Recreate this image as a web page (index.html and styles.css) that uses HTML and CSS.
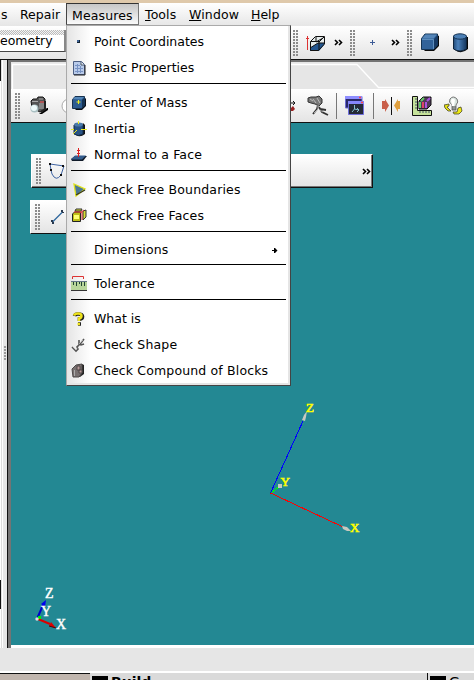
FILE: index.html
```html
<!DOCTYPE html>
<html lang="en">
<head>
<meta charset="utf-8">
<title>Geometry</title>
<link rel="stylesheet" href="styles.css">
</head>
<body>
<div class="screen">
  <div class="desk-strip"></div>
  <nav class="menubar">
    <span class="mb cut">s</span>
    <span class="mb repair">Repair</span>
    <span class="mb active">Measures</span>
    <span class="mb tools"><u>T</u>ools</span>
    <span class="mb window"><u>W</u>indow</span>
    <span class="mb help"><u>H</u>elp</span>
  </nav>

  <div class="toolbar main-bar">
    <div class="combo">eometry</div>
    <div class="bar-right">
      <i class="grip"></i>
      <svg class="ic i-wire" width="20" height="20" viewBox="0 0 20 20"><path d="M4 9L9 3H18.500V11L13 18H4Z" fill="#e6ecec"/><path d="M4 15L12 10H18V12L13 18H4Z" fill="#23568f"/><path d="M4.500 17.500V8.500L9.500 3.500H18.500V11L12.500 17.500H4.500M4.500 8.500H13V17M13 9L18 4M4 15L12 10H18M10 4V9L17 5" fill="none" stroke="#111"/><path d="M1.500 3V17M0 5.500H3" stroke="#d33"/></svg>
      <svg class="ic chev" width="9" height="7" viewBox="0 0 9 7"><path d="M1 1L3.500 3.500L1 6M5 1L7.500 3.500L5 6" fill="none" stroke="#000" stroke-width="1.600"/></svg>
      <i class="grip"></i>
      <svg class="ic i-plus" width="5" height="5" viewBox="0 0 5 5"><path d="M2.500 0V5M0 2.500H5" stroke="#3d5b96"/></svg>
      <svg class="ic chev" width="9" height="7" viewBox="0 0 9 7"><path d="M1 1L3.500 3.500L1 6M5 1L7.500 3.500L5 6" fill="none" stroke="#000" stroke-width="1.600"/></svg>
      <i class="grip"></i>
      <svg class="ic i-box" width="19" height="19" viewBox="0 0 19 19"><path d="M2 16L4 18H13L18 13V3L16 2Z" fill="#0b0b0b"/><path d="M.5 5.500L4 1H16.500V12L12.500 16.500H.5Z" fill="#316299" stroke="#153454"/><path d="M1 5.500L4.500 1.500H16L12.500 5.500Z" fill="#5485b8"/><path d="M13 6L16.500 2V12L13 16Z" fill="#173b66"/><path d="M1 6.500H12.500V16" fill="none" stroke="#5e8ebd"/></svg>
      <svg class="ic i-cyl" width="16" height="20" viewBox="0 0 16 20"><path d="M2 17Q8 22 15 16V4H13Z" fill="#080808"/><path d="M.5 3V16Q7 20 13.500 16V3Z" fill="url(#cy)" stroke="#10263e"/><ellipse cx="7" cy="3.500" rx="6.500" ry="2.700" fill="#4b7fb5" stroke="#173453"/><defs><linearGradient id="cy"><stop offset="0" stop-color="#214a78"/><stop offset=".35" stop-color="#4b81bb"/><stop offset="1" stop-color="#15365d"/></linearGradient></defs></svg>
    </div>
  </div>

  <div class="workspace">
    <div class="splitter"><i class="edge"></i><i class="split-grip"></i><i class="edge-low"></i></div>
    <div class="pane">
      <div class="tabs">
        <svg width="463" height="27" viewBox="0 0 463 27"><path d="M1.500 27V2.500H346L367.500 25.500H463" fill="none" stroke="#fff" stroke-width="1.300"/></svg>
      </div>
      <div class="toolbar view-bar">
        <i class="grip"></i>
        <svg class="ic i-cam" width="19" height="20" viewBox="0 0 19 20"><path d="M9 18L17 12H18V14L12 18Z" fill="#000"/><path d="M1 5L3 3H7L8 1H13L15 3V13L10 16L2 12Z" fill="#555" stroke="#171717"/><path d="M2 5.500H8M9 3H13" stroke="#aaa"/><path d="M9 7H14V13H9Z" fill="#858585"/><path d="M10 6H14" stroke="#d55" stroke-width="1.300"/><path d="M15 5V13L11 16" fill="none" stroke="#222" stroke-width="2"/><circle cx="4.500" cy="12.500" r="4" fill="#a9bfc2"/><circle cx="4" cy="12" r="3" fill="#edf9f9"/></svg>
        <svg class="ic i-ghost" width="12" height="16" viewBox="0 0 12 16"><circle cx="8" cy="8" r="7" fill="#fff" stroke="#aaa"/></svg>
        <div class="view-right">
          <svg class="ic i-frag" width="5" height="12" viewBox="0 0 5 12"><path d="M0 3H4M2 1L4 3L2 5" stroke="#111" fill="none"/><path d="M0 8L2 6L4 9L2 11H0Z" fill="#922"/></svg>
          <svg class="ic i-shot" width="23" height="22" viewBox="0 0 23 22"><path d="M1 3L4 2H9L12 1L15 4V8L12 11L8 9L4 8L1 7Z" fill="#777" stroke="#333"/><path d="M3 4L6 6M6 4L9 8M10 3L13 8" stroke="#bbb"/><path d="M11 10L10 14L6 19M12 12L15 17L21 20M13 14L19 15" fill="none" stroke="#333" stroke-width="1.800"/><path d="M11 10V14L7 18M13 15L16 17" fill="none" stroke="#aaa"/></svg>
          <i class="vsep"></i>
          <svg class="ic i-win" width="20" height="20" viewBox="0 0 20 20"><path d="M.5.500H17V12H.5Z" fill="#292967" stroke="#6b6bd0"/><path d="M0 0H17V3H0Z" fill="#8e8eff"/><path d="M3.500 5.500H18.500V18.500H3.500Z" fill="#242936" stroke="#6e6edd"/><path d="M3 5H19V8H3Z" fill="#8585fa"/><path d="M14 1.500H16M16 6.500H18" stroke="#f44" stroke-width="1.500"/><path d="M9.500 9V13L14 14M9.500 13L7 16M12 12L14 14L12 16" fill="none" stroke="#86bdce"/></svg>
          <i class="vsep"></i>
          <svg class="ic i-mirror" width="19" height="18" viewBox="0 0 19 18"><path d="M9.500 0V18" stroke="#111"/><path d="M0 4H3V2L7 8.500L3 15V12H0Z" fill="#c95f4a"/><path d="M18 4H16V2L12 8.500L16 15V12H18Z" fill="#e0a03f"/></svg>
          <svg class="ic i-rule" width="20" height="20" viewBox="0 0 20 20"><path d="M.5.500H5.500V14.500H19.500V19.500H.5Z" fill="#c5e29a" stroke="#111"/><path d="M3 3H5M3 6H5M3 9H5M3 12H5M8 15V17M11 15V17M14 15V17M17 15V17" stroke="#456"/><path d="M7 5L11 1H19V9L15 13H7Z" fill="#503958" stroke="#111"/><path d="M9 5L12 2M8 6V12" stroke="#6c6" stroke-width="2"/><path d="M11 6V12" stroke="#d46" stroke-width="2"/><path d="M14 6V12M15 5L18 2" stroke="#a5d" stroke-width="2"/></svg>
          <svg class="ic i-bulb" width="19" height="20" viewBox="0 0 19 20"><path d="M6 3Q9-1 13 3Q15 6 12 9V14H8V9Q4 6 6 3Z" fill="#d9e5df" stroke="#777"/><path d="M7 4Q9 1 11 4L10 10H8Z" fill="#fff"/><path d="M8 11H12M8 13H12" stroke="#444"/><path d="M0 9L5 8L5 10L3 11L7 15L4 15L1 12Z" fill="#e4df14" stroke="#332" stroke-width=".7"/><path d="M9 16H13L14 12L17 11L18 15L15 18H10Z" fill="#eee914" stroke="#332" stroke-width=".7"/></svg>
        </div>
      </div>

      <div class="viewport">
        <div class="float-bar bar-a">
          <i class="grip"></i>
          <svg class="ic i-poly" width="18" height="18" viewBox="0 0 18 18"><path d="M2 2L16 4L13 13Q8 20 4 12L3 8Z" fill="none" stroke="#3e63a3"/><path d="M1 1H3V3H1ZM2 7H4V9H2ZM14 3H16V5H14ZM12 12H14V14H12Z" fill="#111"/></svg>
          <svg class="ic chev" width="9" height="7" viewBox="0 0 9 7"><path d="M1 1L3.500 3.500L1 6M5 1L7.500 3.500L5 6" fill="none" stroke="#000" stroke-width="1.600"/></svg>
        </div>
        <div class="float-bar bar-b">
          <i class="grip"></i>
          <svg class="ic i-line" width="13" height="14" viewBox="0 0 13 14"><path d="M1.500 12L11.500 2" stroke="#2f679e" stroke-width="1.300"/><path d="M0 10H2V12H0ZM10 0H12V2H10ZM1 12H3V14H1ZM11 2H13V3H11Z" fill="#28394f"/></svg>
        </div>
        <svg class="axes" width="463" height="522" viewBox="11 123 463 522">
          <g fill="none" shape-rendering="crispEdges"><path d="M270.500 493L303 421" stroke="#00f"/><path d="M270.500 493L343 527" stroke="#f00"/><path d="M271 493L279 487" stroke="#0f0"/></g>
          <path d="M302 420L304 415L307 411L306 417L305 421ZM278 484H282V488H278ZM342 526L347 527L351 531H347L343 529Z" fill="#c8c8c0"/>
          <g class="axis-label" fill="#ff0" stroke="#ff0"><text x="306" y="412">Z</text><text x="280.500" y="486">Y</text><text x="350" y="532">X</text></g>
          <path d="M37 619L43 605" stroke="#00c" stroke-width="2"/><path d="M41 604L46 600L45 607Z" fill="#00e"/>
          <path d="M38 619L50 624" stroke="#d00" stroke-width="2"/><path d="M49 626L51 622L56 628Z" fill="#d00"/><path d="M49 626L56 628" stroke="#500"/>
          <path d="M38 616H41V619H38Z" fill="#0e0"/><circle cx="37" cy="619" r="1.700" fill="#ddd"/>
          <g class="axis-label small" fill="#fff" stroke="#fff"><text x="45" y="598">Z</text><text x="41" y="616">Y</text><text x="56" y="629">X</text></g>
        </svg>
      </div>
      <div class="pane-foot"></div>
    </div>
  </div>

  <div class="statusbar"></div>
  <div class="taskbar">
    <div class="task-desk"></div>
    <div class="task task-one"><i class="task-icon"></i><span>Build</span></div>
    <div class="task task-two"><i class="task-icon"></i><span>G</span></div>
  </div>

  <div class="menu">
    <div class="item"><svg width="16" height="16" viewBox="0 0 16 16"><path d="M6 6H9V9H6Z" fill="#123"/><path d="M6 6H8V8H6Z" fill="#3a5f92"/></svg>Point Coordinates</div>
    <div class="item"><svg width="16" height="16" viewBox="0 0 16 16"><path d="M2.500 1.500H10.500L13.500 4.500V14.500H2.500Z" fill="#b9cbea" stroke="#4d5f83"/><path d="M10 2V5H13" fill="#fff" stroke="#456"/><path d="M4 5.500H9M4 8.500H12M4 11.500H12M6.500 4V13M9.500 6V13" stroke="#7893c4"/><path d="M14 5V15H3" fill="none" stroke="#222"/></svg>Basic Properties</div>
    <hr>
    <div class="item"><svg width="16" height="16" viewBox="0 0 16 16"><path d="M3 13L5 15H11L15 11V3Z" fill="#090f18"/><path d="M1.500 4.500L4 1.500H13.500V10L10.500 13.500H1.500Z" fill="#2d5c91" stroke="#17324f"/><path d="M2 4L4 2H13L10.500 4.500Z" fill="#5285b7"/><path d="M11 5L14 2V10L11 13Z" fill="#153455"/><path d="M7.500 5V9M5.500 7H9.500" stroke="#ee2"/></svg>Center of Mass</div>
    <div class="item wide"><svg width="16" height="16" viewBox="0 0 16 16"><path d="M5 14Q9 17 14 13V4L12 2Z" fill="#111"/><path d="M3 4V13Q7 16 12 13V4Z" fill="#285385" stroke="#132c48"/><ellipse cx="7.500" cy="3.500" rx="4.500" ry="2" fill="#4b79a9"/><path d="M7.500 0V3M10 8.500H16M0 8.500H3M6 9L2 13" stroke="#ee2"/></svg>Inertia</div>
    <div class="item wide"><svg width="16" height="16" viewBox="0 0 16 16"><path d="M4 9H16L12 14H1L0 12Z" fill="#101a28"/><path d="M4 8.500H15L11 12.500H0Z" fill="#345d8e"/><path d="M7.500 1V10M6 3.500H9M6 6.500H9" fill="none" stroke="#d22"/></svg>Normal to a Face</div>
    <hr>
    <div class="item wide"><svg width="16" height="16" viewBox="0 0 16 16"><path d="M3 2L14 7L5 14Z" fill="#4b7796" stroke="#dfe21a" stroke-width="1.300"/><path d="M5 13L14 8" stroke="#332" stroke-width="1.300"/></svg>Check Free Boundaries</div>
    <div class="item wide"><svg width="16" height="16" viewBox="0 0 16 16"><path d="M5 1H11L10 3H4ZM12 3L15 2V9L12 12Z" fill="#d9de34" stroke="#333"/><path d="M1.500 6L3.500 4H9.500V13.500H1.500Z" fill="#bdbf18" stroke="#222"/><path d="M3 7H8V11H3Z" fill="#ffff72"/><path d="M3 4H11V12M9 5L13 2" fill="none" stroke="#d33"/></svg>Check Free Faces</div>
    <hr class="tight">
    <div class="item wide"><svg width="16" height="16"></svg>Dimensions<svg class="sub" width="6" height="5" viewBox="0 0 6 5"><path d="M0 2H2V0H3L5.500 2.500L3 5H2V3H0Z" fill="#000"/></svg></div>
    <hr class="tight up">
    <div class="item wide"><svg width="16" height="16" viewBox="0 0 16 16"><path d="M1.500 3V.500H12.500V3" fill="none" stroke="#d33"/><path d="M0 5H16V14H0Z" fill="#b9d69b"/><path d="M0 14.500H16" stroke="#333"/><path d="M0 5.500H16" stroke="#678"/><path d="M2.500 6V9M5.500 6V10M8.500 6V8M10.500 6V10M13.500 6V10" stroke="#243" /></svg>Tolerance</div>
    <hr>
    <div class="item"><svg width="16" height="16" viewBox="0 0 16 16"><path d="M3.500 5Q4 3 7 3Q11.500 3 11.500 5.500Q11.500 8 8.500 8V10M7 13H10" fill="none" stroke="#222" stroke-width="3.600"/><path d="M3 4.500Q4 2.500 7 2.500Q10.500 2.500 10.500 5Q10.500 7 8 7.500V10M6.500 13H9" fill="none" stroke="#eee31c" stroke-width="2.500"/></svg>What is</div>
    <div class="item wide"><svg width="16" height="16" viewBox="0 0 16 16"><path d="M1 10L5 14L7 12L6 10L10 6L13 2M8 3V7L10 8L13 7" fill="none" stroke="#555" stroke-width="1.600"/><path d="M2 10L5 13L6 11M8 7L12 3" fill="none" stroke="#ccc" stroke-width=".7"/></svg>Check Shape</div>
    <div class="item wide"><svg width="16" height="16" viewBox="0 0 16 16"><path d="M4 14H9L13 11V2L11 1Z" fill="#222"/><path d="M1 6L5 2L11 1V10L8 14H2Z" fill="#777070" stroke="#4c4848"/><path d="M6 3H9V7H6ZM8 7H11V10H8Z" fill="#b79a9a" stroke="#514848"/><path d="M3.500 7V13" stroke="#aaa"/></svg>Check Compound of Blocks</div>
  </div>
</div>
</body>
</html>
```

FILE: styles.css
```css
* { box-sizing: border-box; }
body { margin: 0; font: 12.5px/16px "DejaVu Sans", sans-serif; color: #000; }
.screen { position: relative; width: 474px; height: 680px; overflow: hidden; display: flex; flex-direction: column; background: #e6e6e6; }
svg { display: block; flex: none; }
.desk-strip { height: 3px; background: #dfc9ab; }

.menubar { height: 23px; display: flex; background: linear-gradient(#fff, #e6e6e6); }
.mb { height: 22px; padding-top: 4px; white-space: nowrap; }
.cut { width: 20px; padding-left: 1px; }
.repair { width: 46px; }
.active { width: 73px; padding-left: 5px; border: 1px solid #777; border-top-color: #333; border-left-color: #444; background: linear-gradient(#c6c6c6, #fafafa); letter-spacing: .12px; }
.tools { width: 50px; padding-left: 6px; letter-spacing: .1px; }
.window { width: 62px; letter-spacing: .15px; }

.toolbar { display: flex; align-items: center; background: linear-gradient(#fff, #e4e4e4); }
.main-bar { height: 34px; border-bottom: 1px solid #111; }
.combo { width: 66px; height: 22px; margin-bottom: 3px; padding-top: 3px; border: solid #444; border-width: 0 2px 1px 0; border-right-color: #888; background: repeating-conic-gradient(#bbb 0 25%, #f4f4f4 0 50%) 0 0 / 2px 2px; }
.combo { background: linear-gradient(transparent 5px, #fff 5px), repeating-conic-gradient(#bbb 0 25%, #f4f4f4 0 50%) 0 0 / 2px 2px; }
.bar-right { display: flex; align-items: center; margin-left: 227px; height: 33px; }
.grip { flex: none; width: 6px; height: 26px; background: radial-gradient(circle at 1px 1px, #8b8b8b 1px, transparent 1.200px) 0 0 / 3px 3px; }
.i-wire { margin-left: 7px; }
.main-bar .chev { margin-left: 8px; margin-right: 7px; }
.i-plus { margin-left: 14px; }
.main-bar .i-plus + .chev { margin-left: 16px; }
.i-box { margin-left: 8px; }
.i-cyl { margin-left: 13px; }

.workspace { display: flex; height: 588px; }
.splitter { width: 8px; display: flex; flex-direction: column; border-right: 1px solid #111; background: linear-gradient(90deg, #fff 0 1px, #ddd 1px 2px, #fff 2px 3px, #e6e6e6 3px); }
.edge { width: 1px; height: 21px; background: #111; }
.split-grip { width: 3px; height: 15px; margin: 265px 0 0 4px; background: linear-gradient(#999 2px, transparent 2px) 0 0 / 2px 3px repeat-y; }
.edge-low { width: 1px; height: 29px; margin-top: 219px; background: #111; }
.pane { width: 466px; border: solid #747474; border-width: 2px 0 0 3px; }
.tabs { height: 27px; background: #e6e6e6; }
.view-bar { height: 34px; padding-left: 4px; border-bottom: 1px solid #111; }
.i-cam { margin-left: 9px; }
.i-ghost { margin-left: 12px; }
.view-right { display: flex; align-items: center; margin-left: 218px; height: 33px; }
.i-shot { margin-left: 11px; }
.vsep { width: 1px; height: 26px; background: #777; }
.i-shot + .vsep { margin-left: 6px; }
.i-win { margin: 0 8px; }
.i-mirror { margin-left: 8px; }
.i-rule { margin-left: 11px; }
.i-bulb { margin-left: 12px; }

.viewport { position: relative; height: 522px; background: #238893; }
.float-bar { position: absolute; display: flex; align-items: center; height: 34px; padding-left: 4px; border: 1px solid #fff; border-bottom-color: #111; background: linear-gradient(#fff, #e4e4e4); }
.bar-a { left: 20px; top: 31px; width: 342px; border-right-color: #111; box-shadow: inset -1px -1px #777; }
.bar-b { left: 19px; top: 77px; width: 60px; }
.i-poly { margin-left: 6px; }
.bar-a .chev { margin-left: auto; margin-right: 1px; }
.i-line { margin-left: 10px; }
.axes { position: absolute; left: 0; top: 0; }
.axis-label { font: 13px "Liberation Serif", serif; stroke-width: .6px; }
.axis-label.small { font-size: 14px; stroke-width: .4px; }
.pane-foot { height: 3px; background: #fff; }

.statusbar { height: 23px; background: #e6e6e6; }
.taskbar { display: flex; height: 9px; border-top: 2px solid #fff; background: #dadada; }
.task-desk { width: 90px; border-top: 1px solid #111; background: #c1b6ae; }
.task { display: flex; align-items: flex-start; height: 7px; overflow: hidden; font: bold 14px/16px "DejaVu Sans", sans-serif; }
.task span { padding-top: 1px; }
.task-one { width: 338px; padding-left: 2px; border-right: 1px solid #111; }
.task-icon { width: 16px; height: 4px; margin: 3px 3px 0 0; background: #000; flex: none; }
.task-two { width: 46px; padding-left: 2px; font-weight: normal; }

.menu { position: absolute; left: 66px; top: 25px; width: 225px; height: 361px; padding: 3px 3px 0 4px; border: 1px solid #aaa; border-right-color: #444; border-bottom-color: #444; background: linear-gradient(90deg, #e5e5e5, #fff 24px); box-shadow: inset -2px -2px #e5e5e5; }
.item { display: flex; align-items: center; height: 26px; gap: 7px; white-space: nowrap; }
.item.wide { letter-spacing: .15px; }
.sub { margin-left: auto; margin-right: 9px; }
.menu hr { height: 9px; margin: 0 1px 0 0; border: 0; background: linear-gradient(#000, #000) 0 2px / 100% 1px no-repeat; }
.menu hr.tight { height: 8px; }
.menu hr.up { background-position: 0 1px; }
```
